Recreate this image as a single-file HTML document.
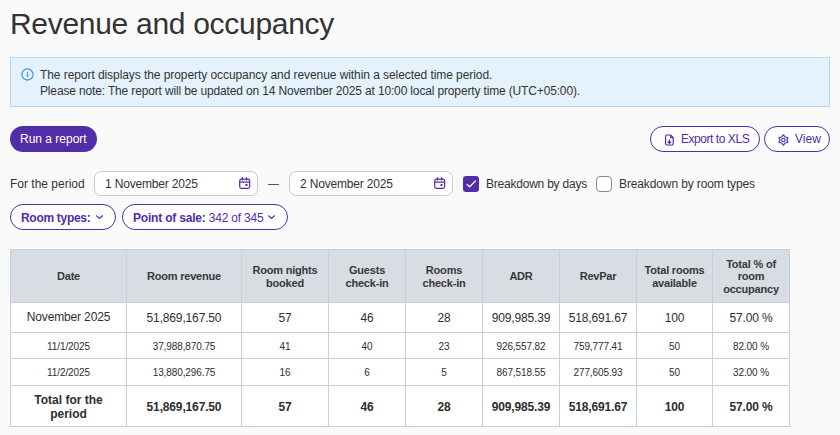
<!DOCTYPE html>
<html><head><meta charset="utf-8">
<style>
*{box-sizing:border-box;margin:0;padding:0}
html,body{width:840px;height:435px;overflow:hidden;background:#fafafa;font-family:"Liberation Sans",sans-serif;color:#333}
.a{position:absolute;white-space:nowrap}
h1{position:absolute;left:10px;top:7px;font-size:30px;letter-spacing:-0.3px;line-height:34px;font-weight:normal;color:#333;white-space:nowrap}
.info{position:absolute;left:10px;top:57px;width:820px;height:50px;background:#e4f2fd;border:1px solid #b5daf7}
.t12{font-size:12px;line-height:14px}
.btn{position:absolute;top:126px;height:26px;border-radius:13px}
.run{left:10px;width:87px;background:#512da8}
.out{border:1px solid #512da8;background:#fff}
.pur{color:#512da8}
.inp{position:absolute;top:171px;width:164px;height:25px;border:1px solid #c9c9c9;border-radius:7px;background:#fff}
.cb{position:absolute;top:176px;width:16px;height:16px;border-radius:3px}
.pill{position:absolute;top:204px;height:26px;border:1px solid #512da8;border-radius:13px;background:#fff}
.tw{position:absolute;left:9px;top:248px;width:781px;height:179px;background:#fff}
table{position:absolute;left:1px;top:1px;border-collapse:collapse;table-layout:fixed;color:#2e2e2e}
td,th{border:1px solid #c8cdd6;text-align:center;padding:0;overflow:hidden}
th{background:#d8dce3;font-size:11px;font-weight:bold;line-height:12.6px;color:#383838;padding-top:1px;letter-spacing:-0.2px}
td{background:#fff}
.r0 td{font-size:12px;letter-spacing:-0.15px}
.r0 td:first-child{padding-bottom:2px}
.r1 td{font-size:10px;letter-spacing:-0.1px}
.r1a td{padding-top:2px}
.tot td{font-size:12px;font-weight:bold;line-height:13.5px;padding-top:4px;letter-spacing:-0.15px}
.tot td:first-child{padding-top:2px;letter-spacing:0;line-height:14px}
</style></head><body>
<h1>Revenue and occupancy</h1>
<div class="info"></div>
<svg class="a" style="left:21px;top:68px" width="13" height="13" viewBox="0 0 13 13"><circle cx="6.5" cy="6.5" r="5.6" fill="none" stroke="#2d8fe3" stroke-width="1.1"/><rect x="5.9" y="5.8" width="1.2" height="3.1" fill="#2d8fe3"/><rect x="5.9" y="3.9" width="1.2" height="1.2" fill="#2d8fe3"/></svg>
<div class="a t12" style="left:40px;top:68px;letter-spacing:-0.07px">The report displays the property occupancy and revenue within a selected time period.</div>
<div class="a t12" style="left:40px;top:84px;letter-spacing:-0.15px">Please note: The report will be updated on 14 November 2025 at 10:00 local property time (UTC+05:00).</div>

<div class="btn run"></div>
<div class="a t12" style="left:20px;top:132px;color:#fff">Run a report</div>

<div class="btn out" style="left:650px;width:110px"></div>
<svg class="a" style="left:660px;top:130px" width="20" height="20" viewBox="0 0 20 20"><path d="M10.6 5H7.1A1.5 1.5 0 0 0 5.6 6.5v7A1.5 1.5 0 0 0 7.1 15h4.6a1.5 1.5 0 0 0 1.5-1.5V7.6z" fill="none" stroke="#512da8" stroke-width="1.2" stroke-linejoin="round"/><path d="M10.6 5v2a.6.6 0 0 0 .6.6h2" fill="none" stroke="#512da8" stroke-width="1.1"/><path d="M9.4 9.5v3.8M7.6 11.6l1.8 1.8 1.8-1.8" fill="none" stroke="#512da8" stroke-width="1.3" stroke-linejoin="round"/></svg>
<div class="a pur" style="left:681px;top:132px;font-size:12px;line-height:14px;letter-spacing:-0.45px">Export to XLS</div>

<div class="btn out" style="left:764px;width:66px"></div>
<svg class="a" style="left:774px;top:130px" width="20" height="20" viewBox="0 0 20 20"><path d="M9.40 4.90 L11.15 6.97 L13.82 7.45 L12.90 10.00 L13.82 12.55 L11.15 13.03 L9.40 15.10 L7.65 13.03 L4.98 12.55 L5.90 10.00 L4.98 7.45 L7.65 6.97Z" fill="none" stroke="#512da8" stroke-width="1.15" stroke-linejoin="round"/><circle cx="9.4" cy="10.0" r="1.7" fill="none" stroke="#512da8" stroke-width="1.1"/></svg>
<div class="a t12 pur" style="left:795px;top:132px">View</div>

<div class="a t12" style="left:10px;top:177px">For the period</div>
<div class="inp" style="left:94px"></div>
<div class="a t12" style="left:105px;top:177px;letter-spacing:-0.17px">1 November 2025</div>
<svg class="a" style="left:235px;top:173px" width="20" height="20" viewBox="0 0 20 20"><rect x="4.7" y="6.2" width="10" height="9.2" rx="1.8" fill="none" stroke="#512da8" stroke-width="1.2"/><path d="M4.7 9.2h10M7.4 4.3v3.2M11.5 4.3v3.2" stroke="#512da8" stroke-width="1.2"/><rect x="10.5" y="11" width="2" height="2" fill="#512da8"/></svg>
<div class="a" style="left:268px;top:184px;width:11px;height:1px;background:#555"></div>
<div class="inp" style="left:289px"></div>
<div class="a t12" style="left:300px;top:177px;letter-spacing:-0.17px">2 November 2025</div>
<svg class="a" style="left:430px;top:173px" width="20" height="20" viewBox="0 0 20 20"><rect x="4.7" y="6.2" width="10" height="9.2" rx="1.8" fill="none" stroke="#512da8" stroke-width="1.2"/><path d="M4.7 9.2h10M7.4 4.3v3.2M11.5 4.3v3.2" stroke="#512da8" stroke-width="1.2"/><rect x="10.5" y="11" width="2" height="2" fill="#512da8"/></svg>
<div class="cb" style="left:463px;background:#512da8"></div>
<svg class="a" style="left:463px;top:176px" width="16" height="16" viewBox="0 0 16 16"><path d="M4.1 8.4L6.6 10.8 12.6 4.9" fill="none" stroke="#fff" stroke-width="1.25" stroke-linecap="round" stroke-linejoin="round"/></svg>
<div class="a t12" style="left:486px;top:177px;letter-spacing:-0.22px">Breakdown by days</div>
<div class="cb" style="left:596px;background:#fff;border:1px solid #8a8a8a;border-radius:4px"></div>
<div class="a t12" style="left:619px;top:177px;letter-spacing:-0.12px">Breakdown by room types</div>

<div class="pill" style="left:10px;width:106px"></div>
<div class="a t12 pur" style="left:21px;top:211px;font-weight:bold;letter-spacing:-0.3px">Room types:</div>
<svg class="a" style="left:95px;top:214px" width="9" height="6" viewBox="0 0 9 6"><path d="M1.3 1.5l3.2 3 3.2-3" fill="none" stroke="#512da8" stroke-width="1.2"/></svg>
<div class="pill" style="left:122px;width:166px"></div>
<div class="a t12 pur" style="left:133px;top:211px;letter-spacing:-0.2px"><b>Point of sale:</b> 342 of 345</div>
<svg class="a" style="left:267px;top:214px" width="9" height="6" viewBox="0 0 9 6"><path d="M1.3 1.5l3.2 3 3.2-3" fill="none" stroke="#512da8" stroke-width="1.2"/></svg>

<div class="tw">
<table>
<colgroup><col style="width:116px"><col style="width:115px"><col style="width:87px"><col style="width:77px"><col style="width:77px"><col style="width:77px"><col style="width:77px"><col style="width:76px"><col style="width:77px"></colgroup>
<tr style="height:53px"><th>Date</th><th>Room revenue</th><th>Room nights<br>booked</th><th>Guests<br>check-in</th><th>Rooms<br>check-in</th><th>ADR</th><th>RevPar</th><th>Total rooms<br>available</th><th>Total % of<br>room<br>occupancy</th></tr>
<tr class="r0" style="height:30px"><td>November 2025</td><td>51,869,167.50</td><td>57</td><td>46</td><td>28</td><td>909,985.39</td><td>518,691.67</td><td>100</td><td>57.00 %</td></tr>
<tr class="r1 r1a" style="height:26px"><td>11/1/2025</td><td>37,988,870.75</td><td>41</td><td>40</td><td>23</td><td>926,557.82</td><td>759,777.41</td><td>50</td><td>82.00 %</td></tr>
<tr class="r1" style="height:27px"><td>11/2/2025</td><td>13,880,296.75</td><td>16</td><td>6</td><td>5</td><td>867,518.55</td><td>277,605.93</td><td>50</td><td>32.00 %</td></tr>
<tr class="tot" style="height:41px"><td>Total for the<br>period</td><td>51,869,167.50</td><td>57</td><td>46</td><td>28</td><td>909,985.39</td><td>518,691.67</td><td>100</td><td>57.00 %</td></tr>
</table>
</div>
</body></html>
